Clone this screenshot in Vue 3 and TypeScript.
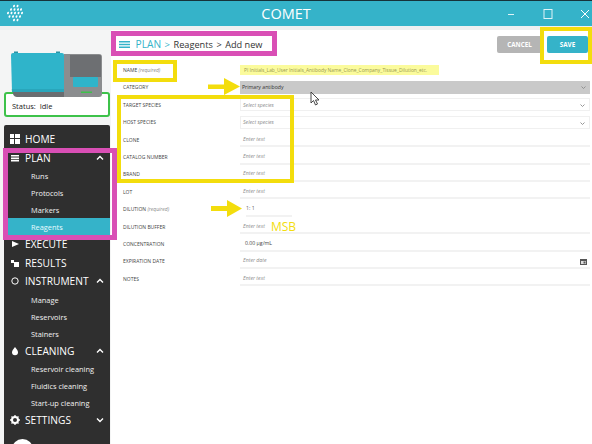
<script setup lang="ts">
interface NavItem {
  label: string
  icon: string
  chevron?: 'up' | 'down'
  children?: string[]
}

interface FormRow {
  label: string
  required?: boolean
  value: string
  kind: string
  suffix?: 'chevron' | 'date'
}

const nav: NavItem[] = [
  { label: 'HOME', icon: 'home' },
  { label: 'PLAN', icon: 'plan', chevron: 'up', children: ['Runs', 'Protocols', 'Markers', 'Reagents'] },
  { label: 'EXECUTE', icon: 'execute' },
  { label: 'RESULTS', icon: 'results' },
  { label: 'INSTRUMENT', icon: 'instrument', chevron: 'up', children: ['Manage', 'Reservoirs', 'Stainers'] },
  { label: 'CLEANING', icon: 'cleaning', chevron: 'up', children: ['Reservoir cleaning', 'Fluidics cleaning', 'Start-up cleaning'] },
  { label: 'SETTINGS', icon: 'settings', chevron: 'down' },
]

const rows: FormRow[] = [
  { label: 'NAME', required: true, value: 'PI Initials_Lab_User Initials_Antibody Name_Clone_Company_Tissue_Dilution_etc.', kind: 'hint' },
  { label: 'CATEGORY', value: 'Primary antibody', kind: 'selected', suffix: 'chevron' },
  { label: 'TARGET SPECIES', value: 'Select species', kind: 'empty boxed', suffix: 'chevron' },
  { label: 'HOST SPECIES', value: 'Select species', kind: 'empty boxed', suffix: 'chevron' },
  { label: 'CLONE', value: 'Enter text', kind: 'empty' },
  { label: 'CATALOG NUMBER', value: 'Enter text', kind: 'empty' },
  { label: 'BRAND', value: 'Enter text', kind: 'empty' },
  { label: 'LOT', value: 'Enter text', kind: 'empty' },
  { label: 'DILUTION', required: true, value: '1:  1', kind: 'filled short' },
  { label: 'DILUTION BUFFER', value: 'Enter text', kind: 'empty' },
  { label: 'CONCENTRATION', value: '0.00 µg/mL', kind: 'filled' },
  { label: 'EXPIRATION DATE', value: 'Enter date', kind: 'empty', suffix: 'date' },
  { label: 'NOTES', value: 'Enter text', kind: 'empty' },
]

// logo dots, slanted grid
const logoDots: number[][] = [
  [14, 6], [17.5, 6],
  [11, 9.5], [14.5, 9.5], [18, 9.5], [21, 9.5],
  [8, 13], [11.5, 13], [15, 13], [18.5, 13], [22, 13],
  [9.5, 16.5], [13, 16.5], [16.5, 16.5], [20, 16.5],
  [14, 20], [17.5, 20],
]
</script>

<template>
  <div class="app">
    <header class="titlebar">
      <svg class="logo" width="30" height="26" viewBox="0 0 30 26">
        <ellipse
          v-for="(d, i) in logoDots"
          :key="i"
          :cx="d[0]"
          :cy="d[1]"
          rx="0.9"
          ry="1.3"
          fill="#fff"
          :transform="`rotate(25 ${d[0]} ${d[1]})`"
        />
      </svg>
      <span class="app-name">COMET</span>
      <div class="win-buttons">
        <svg width="10" height="10" viewBox="0 0 10 10"><path d="M2 5.500h6" stroke="#dff3f7" stroke-width="1" /></svg>
        <svg width="10" height="10" viewBox="0 0 10 10"><rect x="1" y="0.500" width="8" height="9" fill="none" stroke="#dff3f7" /></svg>
        <svg width="10" height="10" viewBox="0 0 10 10"><path d="M1 1l8 8M9 1l-8 8" stroke="#fff" /></svg>
      </div>
    </header>

    <div class="shell">
      <aside class="sidebar">
        <div class="device">
          <svg width="100" height="50" viewBox="0 0 100 50">
            <path d="M56 6h35q3 0 3 3v37q0 3-3 3H56z" fill="#8b8d8f" />
            <path d="M5 44h51v5H9q-3 0-4-3z" fill="#6a6d70" />
            <rect x="48" y="3.500" width="4" height="2" fill="#2a93a6" />
            <rect x="6" y="3.500" width="4" height="2" fill="#2a93a6" />
            <path d="M5 5h49q2 0 2 2v37H4L3 7q0-2 2-2z" fill="#2fb4ca" />
            <path d="M3.800 41h52.200v3H4z" fill="#29a6bb" />
            <path d="M62 7h30q1 0 1 1v21H62z" fill="#6d6f72" />
            <rect x="65" y="29" width="25" height="10" rx="1" fill="#2fb4ca" />
            <rect x="73" y="43.500" width="11" height="1.500" fill="#3dc24a" />
          </svg>
        </div>
        <div class="status">Status:&nbsp; Idle</div>
        <nav class="nav">
          <template v-for="item in nav" :key="item.label">
            <div class="nav-head">
              <svg class="nav-icon" width="10" height="10" viewBox="0 0 10 10">
                <path v-if="item.icon === 'home'" d="M0 0h4v4H0zM5 0h5v4H5zM0 5h4v5H0zM5 5h5v5H5z" fill="#fff" />
                <path v-else-if="item.icon === 'plan'" d="M1 2h8v1.600H1zM1 4.400h8V6H1zM1 6.800h8v1.600H1z" fill="#fff" />
                <path v-else-if="item.icon === 'execute'" d="M2 2l7 3-7 3z" fill="#fff" />
                <path v-else-if="item.icon === 'results'" d="M1 2h3v3H1zM4 4h5v5H4z" fill="#fff" />
                <circle v-else-if="item.icon === 'instrument'" cx="5" cy="5" r="3.200" fill="none" stroke="#fff" />
                <path v-else-if="item.icon === 'cleaning'" d="M5 1c2 2.600 3 4 3 5.200a3 3 0 0 1-6 0C2 5 3 3.600 5 1z" fill="#fff" />
                <g v-else>
                  <circle cx="5" cy="5" r="3" fill="none" stroke="#fff" stroke-width="2" />
                  <path d="M5 0v2M5 8v2M0 5h2M8 5h2M1.500 1.500l1.400 1.400M7.100 7.100l1.400 1.400M8.500 1.500L7.100 2.900M2.900 7.100L1.500 8.500" stroke="#fff" stroke-width="1.300" />
                </g>
              </svg>
              <span>{{ item.label }}</span>
              <svg v-if="item.chevron" class="nav-chevron" width="8" height="6" viewBox="0 0 8 6">
                <path :d="item.chevron === 'up' ? 'M1 4.500L4 1.500 7 4.500' : 'M1 1.500L4 4.500 7 1.500'" fill="none" stroke="#fff" stroke-width="1.400" />
              </svg>
            </div>
            <div
              v-for="child in item.children"
              :key="child"
              class="nav-child"
              :class="{ active: child === 'Reagents' }"
            >{{ child }}</div>
          </template>
          <div class="avatar"></div>
        </nav>
      </aside>

      <main class="content">
        <div class="top-row">
          <div class="crumbs">
            <svg width="11" height="9" viewBox="0 0 11 9"><path d="M0 1h11v1.500H0zM0 3.800h11v1.500H0zM0 6.600h11v1.500H0z" fill="#35b3c9" /></svg>
            <span class="crumb-plan">PLAN</span>
            <span class="crumb-plan sep">&gt;</span>
            <span>Reagents</span>
            <span>&gt;</span>
            <span>Add new</span>
          </div>
          <div class="actions">
            <button class="btn cancel" type="button">CANCEL</button>
            <button class="btn save" type="button">SAVE</button>
          </div>
        </div>

        <div class="form">
          <div v-for="row in rows" :key="row.label" class="row">
            <div class="label">{{ row.label }} <em v-if="row.required">(required)</em></div>
            <div class="field" :class="row.kind">
              <span class="value">{{ row.value }}</span>
              <svg v-if="row.suffix === 'chevron'" class="suffix" width="7" height="5" viewBox="0 0 7 5">
                <path d="M1.500 1.500l2 2 2-2" fill="none" stroke="#8a8a8a" stroke-width="0.900" />
              </svg>
              <svg v-if="row.suffix === 'date'" class="suffix date" width="7" height="7" viewBox="0 0 7 7">
                <path d="M0 1h7v6H0z" fill="#555" /><path d="M1 3h5v3H1z" fill="#ddd" /><path d="M3.500 3.500h2v2h-2z" fill="#555" />
              </svg>
            </div>
          </div>
        </div>
      </main>
    </div>

    <!-- annotations drawn over the screenshot -->
    <div class="mark pink" style="left: 3px; top: 148px; width: 114px; height: 92px"></div>
    <div class="mark pink" style="left: 111px; top: 31px; width: 166px; height: 25px"></div>
    <div class="mark yellow" style="left: 113px; top: 60px; width: 64px; height: 22px"></div>
    <div class="mark yellow" style="left: 117px; top: 95px; width: 177px; height: 88px"></div>
    <div class="mark yellow" style="left: 540px; top: 27px; width: 52px; height: 37px"></div>
    <svg class="arrow" style="left: 208px; top: 78px" width="32" height="17" viewBox="0 0 32 17">
      <path d="M0 6.500h16V0l16 8.500-16 8.500v-6H0z" fill="#f3dd0d" />
    </svg>
    <svg class="arrow" style="left: 211px; top: 200px" width="31" height="17" viewBox="0 0 31 17">
      <path d="M0 6h16V0l15 8.500-15 8.500v-6H0z" fill="#f3dd0d" />
    </svg>
    <span class="msb">MSB</span>
    <svg class="cursor" width="10" height="15" viewBox="0 0 10 15">
      <path d="M1 1v11l2.500-2.500L5.500 14l2-1-2-4H9z" fill="#fff" stroke="#333" stroke-width="0.900" />
    </svg>
  </div>
</template>

<style>
html,
body {
  margin: 0;
  background: #fff;
}
</style>

<style scoped>
.app {
  position: relative;
  width: 592px;
  height: 444px;
  overflow: hidden;
  display: flex;
  flex-direction: column;
  font-family: "Open Sans", "Noto Sans", sans-serif;
  background: #fff;
}

.titlebar {
  position: relative;
  flex: none;
  height: 26px;
  border-top: 1px solid #16333a;
  box-sizing: border-box;
  display: flex;
  align-items: center;
  justify-content: center;
  padding-right: 20px;
  background: #35b3c9;
  color: #fff;
}

.logo {
  position: absolute;
  left: 0;
  top: -1px;
}

.app-name {
  font-size: 14.500px;
}

.win-buttons {
  position: absolute;
  right: 2px;
  top: 8px;
  display: flex;
  gap: 27px;
}

.shell {
  flex: 1;
  min-height: 0;
  display: flex;
  background: #eef0f1;
  padding-top: 4px;
}

.sidebar {
  flex: none;
  width: 111px;
  box-sizing: border-box;
  padding: 18px 1px 0 4px;
  display: flex;
  flex-direction: column;
  background: #f4f5f5;
}

.device {
  position: relative;
  z-index: 1;
  height: 44px;
  padding-left: 4px;
}

.status {
  box-sizing: border-box;
  height: 25px;
  margin-bottom: 8px;
  padding-left: 6px;
  border: 2px solid #3dc24a;
  border-radius: 3px;
  font-size: 7.500px;
  line-height: 25px;
  color: #222;
  background: #fff;
}

.nav {
  flex: 1;
  background: #2f2f2f;
  border-radius: 2px 2px 0 0;
  padding-top: 5px;
  color: #fff;
}

.nav-head {
  position: relative;
  height: 18.500px;
  display: flex;
  align-items: center;
  padding-left: 6px;
  gap: 5px;
  font-size: 10.200px;
}

.nav-icon {
  flex: none;
}

.nav-chevron {
  position: absolute;
  right: 6px;
  top: 6px;
}

.nav-child {
  height: 17px;
  padding-left: 27px;
  font-size: 7.400px;
  line-height: 18px;
  color: #f2f2f2;
}

.nav-child.active {
  background: #35b3c9;
  color: #e8fbff;
}

.avatar {
  width: 21px;
  height: 21px;
  margin: 9px 0 0 8px;
  border-radius: 50%;
  background: #fff;
}

.content {
  flex: 1;
  min-width: 0;
  padding: 4px 2px 0 8px;
  background: #fff;
}

.top-row {
  height: 27.300px;
  display: flex;
  justify-content: space-between;
}

.crumbs {
  height: 20px;
  display: flex;
  align-items: center;
  gap: 3.500px;
  font-size: 9.200px;
  color: #333;
}

.crumbs svg {
  margin-right: 2px;
}

.crumb-plan {
  color: #35b3c9;
  font-size: 10.200px;
}

.sep {
  font-size: 9.500px;
}

.actions {
  display: flex;
  gap: 5px;
  padding: 2px 2px 0 0;
}

.btn {
  height: 17px;
  padding: 0;
  border: 0;
  border-radius: 2px;
  font-family: inherit;
  font-size: 6.300px;
  font-weight: 700;
  color: #fff;
}

.cancel {
  width: 45px;
  background: #b5b5b5;
}

.save {
  width: 41px;
  background: #35b3c9;
}

.form {
  display: flex;
  flex-direction: column;
}

.row {
  height: 17.420px;
  display: flex;
  align-items: center;
}

.label {
  flex: none;
  width: 121px;
  padding-left: 4px;
  box-sizing: border-box;
  font-size: 5px;
  color: #444;
}

.label em {
  color: #888;
}

.field {
  position: relative;
  box-sizing: border-box;
  flex: 1;
  height: 15px;
  display: flex;
  align-items: center;
  padding-left: 3px;
  border-bottom: 2px solid #f2f2f2;
  font-size: 5.200px;
}

.value {
  white-space: nowrap;
}

.empty .value {
  color: #8a8a8a;
  font-style: italic;
}

.boxed {
  height: 13px;
  padding-left: 2px;
  border: 1px solid #f0f0f0;
}

.hint {
  flex: none;
  width: 199px;
  height: 10px;
  border-bottom: 0;
  background: #fbfb9c;
  color: #9a9a50;
  padding-left: 4px;
  font-size: 4.900px;
}

.selected {
  background: #c9c9c9;
  border-bottom: 0;
  color: #333;
  height: 13px;
  padding-left: 2px;
}

.filled {
  color: #444;
  padding-left: 5px;
}

.short {
  flex: none;
  width: 46px;
  margin-left: 6px;
  padding-left: 0;
  color: #666;
}

.suffix {
  position: absolute;
  right: 3px;
  top: 4px;
}

.mark {
  position: absolute;
  box-sizing: border-box;
  pointer-events: none;
}

.pink {
  border: 5px solid #d94fb5;
}

.yellow {
  border: 4px solid #f3dd0d;
}

.arrow,
.cursor {
  position: absolute;
}

.cursor {
  left: 310px;
  top: 91px;
}

.msb {
  position: absolute;
  left: 271px;
  top: 218px;
  font-size: 12px;
  color: #f3dd0d;
}
</style>
